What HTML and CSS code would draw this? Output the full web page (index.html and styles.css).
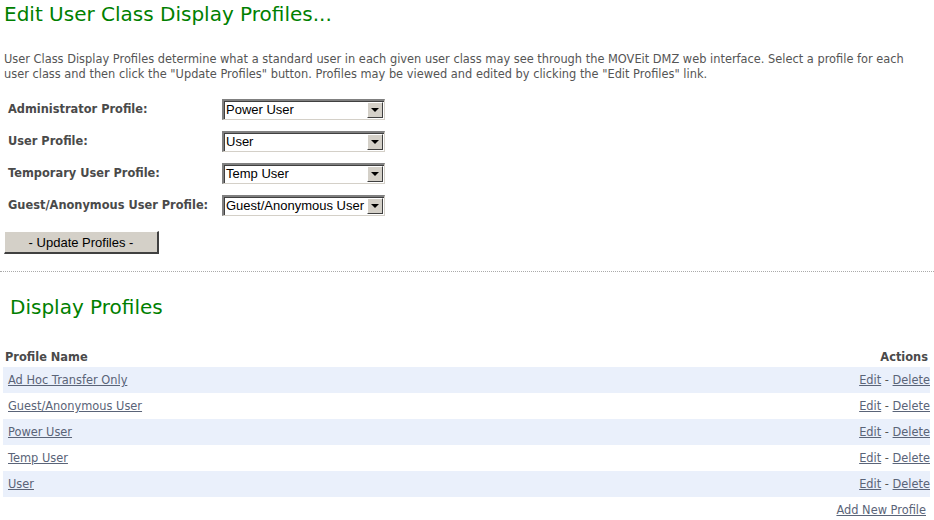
FILE: index.html
```html
<!DOCTYPE html>
<html>
<head>
<meta charset="utf-8">
<link rel="stylesheet" href="styles.css">
</head>
<body>
<h1 class="title">Edit User Class Display Profiles...</h1>
<p class="intro">User Class Display Profiles determine what a standard user in each given user class may see through the MOVEit DMZ web interface. Select a profile for each user class and then click the "Update Profiles" button. Profiles may be viewed and edited by clicking the "Edit Profiles" link.</p>
<form class="profile-form">
  <div class="form-row">
    <label class="form-label">Administrator Profile:</label>
    <div class="select"><span class="select-value">Power User</span><span class="select-btn"><span class="arrow"></span></span></div>
  </div>
  <div class="form-row">
    <label class="form-label">User Profile:</label>
    <div class="select"><span class="select-value">User</span><span class="select-btn"><span class="arrow"></span></span></div>
  </div>
  <div class="form-row">
    <label class="form-label">Temporary User Profile:</label>
    <div class="select"><span class="select-value">Temp User</span><span class="select-btn"><span class="arrow"></span></span></div>
  </div>
  <div class="form-row">
    <label class="form-label">Guest/Anonymous User Profile:</label>
    <div class="select"><span class="select-value">Guest/Anonymous User</span><span class="select-btn"><span class="arrow"></span></span></div>
  </div>
  <div class="button-row">
    <span class="btn">- Update Profiles -</span>
  </div>
</form>
<hr class="divider">
<h2 class="subtitle">Display Profiles</h2>
<table class="profiles">
  <thead>
    <tr><th class="col-name">Profile Name</th><th class="col-actions">Actions</th></tr>
  </thead>
  <tbody>
    <tr class="alt"><td><a href="#">Ad Hoc Transfer Only</a></td><td class="actions"><a href="#">Edit</a> - <a href="#">Delete</a></td></tr>
    <tr><td><a href="#">Guest/Anonymous User</a></td><td class="actions"><a href="#">Edit</a> - <a href="#">Delete</a></td></tr>
    <tr class="alt"><td><a href="#">Power User</a></td><td class="actions"><a href="#">Edit</a> - <a href="#">Delete</a></td></tr>
    <tr><td><a href="#">Temp User</a></td><td class="actions"><a href="#">Edit</a> - <a href="#">Delete</a></td></tr>
    <tr class="alt"><td><a href="#">User</a></td><td class="actions"><a href="#">Edit</a> - <a href="#">Delete</a></td></tr>
  </tbody>
</table>
<div class="add-row"><a href="#">Add New Profile</a></div>
</body>
</html>
```
FILE: styles.css
```css
html, body {
  margin: 0;
  padding: 0;
  background: #ffffff;
}
body {
  font-family: "DejaVu Sans", Verdana, sans-serif;
  font-size: 11.4px;
  color: #555555;
  padding: 0 4px;
}
.title {
  font-family: "DejaVu Sans", sans-serif;
  font-weight: normal;
  font-size: 20px;
  color: #008000;
  margin: 0;
  height: 30px;
  line-height: 28px;
}
.intro {
  margin: 22px 0 0 0;
  line-height: 15px;
}
.profile-form {
  margin-top: 11px;
}
.form-row {
  display: flex;
  align-items: center;
  height: 32px;
}
.form-label {
  width: 214px;
  padding-left: 4px;
  font-weight: bold;
  color: #4a4a4a;
}
.select {
  display: flex;
  width: 163px;
  height: 21px;
  box-sizing: border-box;
  border-top: 2px solid #808080;
  border-left: 2px solid #808080;
  border-right: 1px solid #d4d0c8;
  border-bottom: 1px solid #d4d0c8;
  background: #ffffff;
  box-shadow: inset 1px 1px 0 #404040;
}
.select-value {
  flex: 1;
  font-family: "Liberation Sans", Arial, sans-serif;
  font-size: 13px;
  color: #000000;
  line-height: 17px;
  padding-left: 2px;
  white-space: nowrap;
  overflow: hidden;
}
.select-btn {
  width: 16px;
  height: 16px;
  margin: 1px 1px 0 0;
  box-sizing: border-box;
  background: #d4d0c8;
  border-top: 1px solid #ffffff;
  border-left: 1px solid #ffffff;
  border-right: 1px solid #404040;
  border-bottom: 1px solid #404040;
  display: flex;
  align-items: center;
  justify-content: center;
}
.arrow {
  width: 0;
  height: 0;
  border-left: 4px solid transparent;
  border-right: 4px solid transparent;
  border-top: 4px solid #000000;
  margin-top: 1px;
}
.button-row {
  margin-top: 10px;
}
.btn {
  display: inline-flex;
  align-items: center;
  justify-content: center;
  width: 155px;
  height: 23px;
  box-sizing: border-box;
  background: #d4d0c8;
  border-top: 1px solid #ffffff;
  border-left: 1px solid #ffffff;
  border-right: 2px solid #404040;
  border-bottom: 2px solid #404040;
  font-family: "Liberation Sans", Arial, sans-serif;
  font-size: 13px;
  color: #000000;
}
.divider {
  border: none;
  border-top: 1px dotted #aaaaaa;
  margin: 17px -4px 0 -4px;
  height: 0;
}
.subtitle {
  font-weight: normal;
  font-size: 20px;
  color: #008000;
  margin: 21px 0 0 6px;
  line-height: 28px;
}
.profiles {
  width: 927px;
  margin-top: 26px;
  margin-left: -1px;
  border-collapse: collapse;
}
.profiles th {
  font-weight: bold;
  color: #4a4a4a;
  height: 20px;
  padding: 0 2px;
}
.col-name { text-align: left; }
.col-actions { text-align: right; }
.profiles td {
  height: 26px;
  padding: 0 0 0 5px;
}
.profiles td.actions {
  text-align: right;
  padding: 0 0 0 0;
}
.profiles tr.alt td {
  background: #eaf0fb;
}
a {
  color: #5a6478;
  text-decoration: underline;
}
.add-row {
  text-align: right;
  padding: 6px 4px 0 0;
}
```
